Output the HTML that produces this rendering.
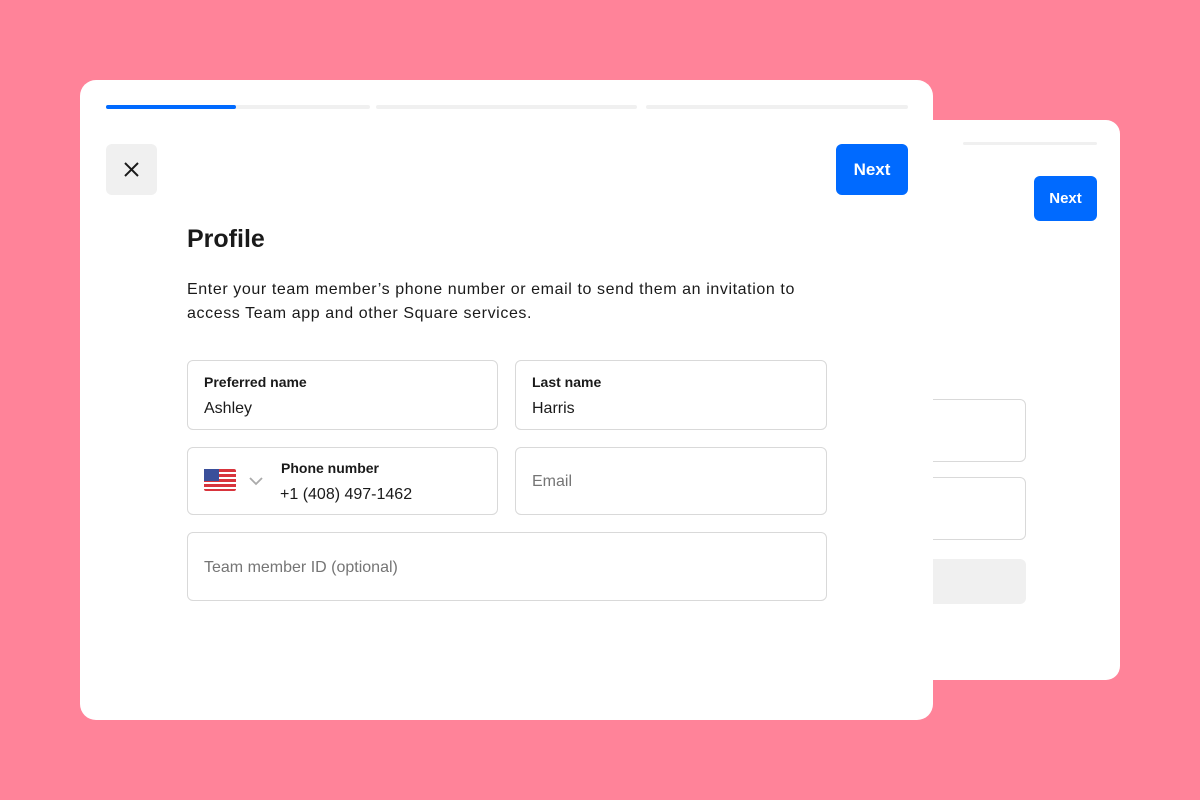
<!DOCTYPE html>
<html><head><style>
*{box-sizing:border-box;margin:0;padding:0}
body{width:1200px;height:800px;background:#ff8399;font-family:"Liberation Sans",Arial,sans-serif;position:relative;overflow:hidden;color:#1a1a1a}
.card{position:absolute;background:#fff;border-radius:14px}
.bar{position:absolute;height:4px;border-radius:2px;background:#f0f0f0}
.btn{position:absolute;background:#006aff;color:#fff;font-weight:bold;border-radius:6px;display:flex;align-items:center;justify-content:center}
.f{position:absolute;border:1px solid #d9d9d9;border-radius:6px;background:#fff}
.lbl{position:absolute;font-size:14px;font-weight:bold;color:#1a1a1a}
.val{position:absolute;font-size:16px;color:#1a1a1a}
.ph{position:absolute;font-size:16px;color:#757575}
</style></head><body>
<div class="card" style="left:500px;top:120px;width:620px;height:560px">
 <div class="bar" style="left:360px;top:22px;width:72px;height:3px"></div>
 <div class="bar" style="left:463px;top:22px;width:134px;height:3px"></div>
 <div class="btn" style="left:534px;top:56px;width:63px;height:45px;font-size:15px">Next</div>
 <div class="f" style="left:380px;top:279px;width:146px;height:63px"></div>
 <div class="f" style="left:380px;top:357px;width:146px;height:63px"></div>
 <div style="position:absolute;left:380px;top:439px;width:146px;height:45px;background:#f0f0f0;border-radius:6px"></div>
</div>
<div class="card" style="left:80px;top:80px;width:853px;height:640px;border-radius:16px">
 <div class="bar" style="left:26px;top:25px;width:264px"></div>
 <div class="bar" style="left:26px;top:25px;width:130px;background:#006aff"></div>
 <div class="bar" style="left:296px;top:25px;width:261px"></div>
 <div class="bar" style="left:566px;top:25px;width:262px"></div>
 <div style="position:absolute;left:26px;top:64px;width:51px;height:51px;background:#f0f0f0;border-radius:6px">
  <svg width="51" height="51" viewBox="0 0 51 51"><path d="M19 19L32 32M32 19L19 32" stroke="#1a1a1a" stroke-width="2"/></svg>
 </div>
 <div class="btn" style="left:756px;top:64px;width:72px;height:51px;font-size:17px">Next</div>
 <div style="position:absolute;left:107px;top:145px;font-size:25px;font-weight:bold">Profile</div>
 <div style="position:absolute;left:107px;top:198px;width:630px;font-size:16px;line-height:24px;letter-spacing:0.6px">Enter your team member’s phone number or email to send them an invitation to access Team app and other Square services.</div>
</div>
<div class="f" style="left:187px;top:360px;width:311px;height:70px"><div class="lbl" style="left:16px;top:13px">Preferred name</div><div class="val" style="left:16px;top:39px">Ashley</div></div>
<div class="f" style="left:515px;top:360px;width:312px;height:70px"><div class="lbl" style="left:16px;top:13px">Last name</div><div class="val" style="left:16px;top:39px">Harris</div></div>
<div class="f" style="left:187px;top:447px;width:311px;height:68px">
 <svg style="position:absolute;left:16px;top:21px" width="32" height="22" viewBox="0 0 32 22"><rect width="32" height="22" rx="2" fill="#d8343c"/><g fill="#fff"><rect y="3" width="32" height="2"/><rect y="8" width="32" height="2"/><rect y="13" width="32" height="2"/><rect y="18" width="32" height="2"/></g><rect width="15" height="12" fill="#3a4f9a"/></svg>
 <svg style="position:absolute;left:60px;top:28px" width="16" height="10" viewBox="0 0 16 10"><path d="M2 2L8 8L14 2" stroke="#aaa" stroke-width="1.8" fill="none"/></svg>
 <div class="lbl" style="left:93px;top:12px">Phone number</div><div class="val" style="left:92px;top:38px">+1 (408) 497-1462</div></div>
<div class="f" style="left:515px;top:447px;width:312px;height:68px"><div class="ph" style="left:16px;top:25px">Email</div></div>
<div class="f" style="left:187px;top:532px;width:640px;height:69px"><div class="ph" style="left:16px;top:26px">Team member ID (optional)</div></div>
</body></html>
